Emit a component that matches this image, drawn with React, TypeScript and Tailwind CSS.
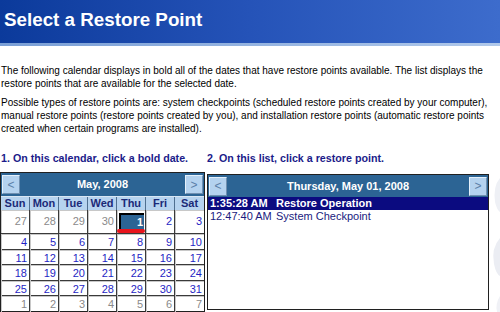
import React from 'react';

// Calendar weeks, [day, inMonth]
const weeks: [number, boolean][][] = [
    [[27, false], [28, false], [29, false], [30, false], [1, true], [2, true], [3, true]],
    [[4, true], [5, true], [6, true], [7, true], [8, true], [9, true], [10, true]],
    [[11, true], [12, true], [13, true], [14, true], [15, true], [16, true], [17, true]],
    [[18, true], [19, true], [20, true], [21, true], [22, true], [23, true], [24, true]],
    [[25, true], [26, true], [27, true], [28, true], [29, true], [30, true], [31, true]],
    [[1, false], [2, false], [3, false], [4, false], [5, false], [6, false], [7, false]],
];

const rowHeights = ['h-[23px]', 'h-[16px]', 'h-[15px]', 'h-[16px]', 'h-[15px]', 'h-[16px]'];

const dayNames = ['Sun', 'Mon', 'Tue', 'Wed', 'Thu', 'Fri', 'Sat'];

const restorePoints = [
    { time: '1:35:28 AM', name: 'Restore Operation', selected: true },
    { time: '12:47:40 AM', name: 'System Checkpoint', selected: false },
];

function NavButton({ label }: { label: string }) {
    return (
        <div className="w-[18px] h-[19px] flex items-center justify-center bg-[#b4d2ef] border border-t-[#e4f0fb] border-l-[#e4f0fb] border-b-[#6f8fb0] border-r-[#6f8fb0] text-[12px] leading-none text-[#5b80a8]">
            {label}
        </div>
    );
}

function Calendar() {
    return (
        <div className="relative w-[205px] border border-[#202020] bg-white">
            {/* month nav */}
            <div className="h-[23px] bg-[#2c6494] flex items-center justify-between px-[1px]">
                <NavButton label="<" />
                <span className="text-[11px] font-bold text-white">May, 2008</span>
                <NavButton label=">" />
            </div>
            {/* day names */}
            <div className="grid grid-cols-[repeat(7,29px)] border-t border-[#d8e6f4]">
                {dayNames.map((d, i) => (
                    <div
                        key={d}
                        className={`h-[13px] bg-[#b6d3ef] text-[11px] leading-[13px] font-bold text-[#1b2a78] text-center ${i < 6 ? 'border-r border-[#4f6f90]' : ''}`}
                    >
                        {d}
                    </div>
                ))}
            </div>
            {/* dates */}
            {weeks.map((week, w) => (
                <div key={w} className={`grid grid-cols-[repeat(7,29px)] ${rowHeights[w]} ${w > 0 ? 'border-t border-[#3a3a3a]' : ''}`}>
                    {week.map(([day, inMonth], i) => {
                        const selected = w === 0 && day === 1;
                        return (
                            <div
                                key={i}
                                className={`relative text-[11px] text-right pr-[2px] flex items-center justify-end shadow-[inset_1px_1px_0_#c8c8c8] ${i < 6 ? 'border-r border-[#3a3a3a]' : ''} ${inMonth ? 'text-[#1f1fc4]' : 'text-[#8a8a8a]'}`}
                            >
                                {selected ? (
                                    <div className="absolute left-[2px] top-[3px] right-[1px] bottom-[3px] bg-[#2c6494] border-l-2 border-t-2 border-black flex items-center justify-end pr-[1px] text-white font-bold">
                                        {day}
                                    </div>
                                ) : (
                                    day
                                )}
                            </div>
                        );
                    })}
                </div>
            ))}
            {/* red marker stroke */}
            <div className="absolute left-[116px] top-[56px] w-[28px] h-[4px] rounded-full bg-[#e8141c] blur-[0.6px]" />
        </div>
    );
}

function PointList() {
    return (
        <div className="w-[282px] h-[136px] mt-[2px] border border-[#202020] bg-white">
            <div className="h-[22px] bg-[#2c6494] flex items-center justify-between px-[1px]">
                <NavButton label="<" />
                <span className="text-[11px] font-bold text-white">Thursday, May 01, 2008</span>
                <NavButton label=">" />
            </div>
            {restorePoints.map((p) => (
                <div
                    key={p.time}
                    className={`h-[13px] flex items-center text-[11px] pl-[2px] ${p.selected ? 'bg-[#0b0b80] text-white font-bold' : 'text-[#1b1b80]'}`}
                >
                    <span className="w-[66px]">{p.time}</span>
                    <span>{p.name}</span>
                </div>
            ))}
        </div>
    );
}

export default function App() {
    return (
        <div className="relative w-[500px] h-[312px] overflow-hidden bg-white font-['Liberation_Sans',Arial,sans-serif]">
            {/* faint watermark at right edge */}
            <svg className="absolute right-0 top-[160px]" width="10" height="152" viewBox="0 0 10 152">
                <path d="M10 18 Q3 26 5 42 Q7 50 10 52 Z" fill="#eef0f5" />
                <path d="M10 78 Q1 88 4 104 Q6 114 10 116 Z" fill="#ebedf3" />
                <path d="M10 136 Q5 144 7 152 L10 152 Z" fill="#f0f1f6" />
            </svg>

            {/* title bar */}
            <div className="h-[43px] bg-linear-to-r from-[#0b3a9b] via-[#2553b8] to-[#3d6ccc] flex items-center pl-[4px] pb-[2px]">
                <h1 className="text-[18.8px] font-bold text-white">Select a Restore Point</h1>
            </div>
            <div className="h-[3px] bg-linear-to-r from-[#7a9fd6] to-[#b0c8ea]" />

            {/* description */}
            <div className="pt-[18px] pl-[1px] text-[10px] leading-[13px] text-black whitespace-nowrap">
                <p>
                    The following calendar displays in bold all of the dates that have restore points available. The list displays the
                    <br />
                    restore points that are available for the selected date.
                </p>
                <p className="mt-[6px]">
                    Possible types of restore points are: system checkpoints (scheduled restore points created by your computer),
                    <br />
                    manual restore points (restore points created by you), and installation restore points (automatic restore points
                    <br />
                    created when certain programs are installed).
                </p>
            </div>

            {/* steps */}
            <div className="mt-[17px] flex text-[10.7px] leading-[13px] font-bold text-[#1b1b8a]">
                <div className="w-[207px] pl-[1px]">1. On this calendar, click a bold date.</div>
                <div>2. On this list, click a restore point.</div>
            </div>

            <div className="mt-[7px] flex gap-[2px]">
                <Calendar />
                <PointList />
            </div>
        </div>
    );
}
